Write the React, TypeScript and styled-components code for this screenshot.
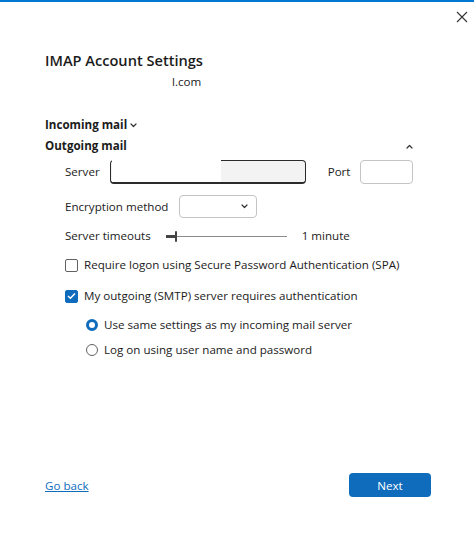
import React from 'react';
import styled, { createGlobalStyle } from 'styled-components';

const GlobalStyle = createGlobalStyle`
  body {
    margin: 0;
    background: #ffffff;
    font-family: 'Open Sans', 'Noto Sans', sans-serif;
    color: #1b1b1b;
  }
`;

const Window = styled.div`
  width: 474px;
  height: 545px;
  box-sizing: border-box;
  border-top: 2px solid #0078d4;
  background: #ffffff;
  display: flex;
  flex-direction: column;
`;

const TitleBar = styled.div`
  height: 46px;
  display: flex;
  justify-content: flex-end;
  align-items: flex-start;
  padding: 7px 5px 0 0;
  box-sizing: border-box;
`;

const CloseButton = styled.button`
  width: 15px;
  height: 15px;
  padding: 0;
  border: 0;
  background: none;
  display: flex;
  align-items: center;
  justify-content: center;
  color: #333333;
`;

const Content = styled.div`
  padding: 0 44px 0 45px;
  display: flex;
  flex-direction: column;
`;

const Title = styled.h1`
  margin: 0;
  font-size: 14.6px;
  font-weight: 600;
  line-height: 24px;
`;

const Subtitle = styled.div`
  font-size: 11.6px;
  line-height: 20px;
  padding-left: 127px;
  margin-bottom: 23px;
`;

const SectionHeader = styled.div<{ $gap?: number }>`
  display: flex;
  align-items: center;
  font-size: 11.6px;
  font-weight: 700;
  line-height: 20px;
  margin-top: ${({ $gap }) => $gap ?? 0}px;
`;

const InlineChevron = styled.span`
  display: inline-flex;
  margin-left: 3px;
`;

const RightChevron = styled.span`
  display: inline-flex;
  margin-left: auto;
  margin-right: 17px;
`;

const Section = styled.div`
  padding-left: 20px;
  display: flex;
  flex-direction: column;
`;

const Row = styled.div<{ $top: number; $gap?: number }>`
  display: flex;
  align-items: center;
  gap: ${({ $gap }) => $gap ?? 10}px;
  margin-top: ${({ $top }) => $top}px;
  font-size: 11.6px;
  line-height: 20px;
`;

const Field = styled.div<{ $width: number }>`
  position: relative;
  width: ${({ $width }) => $width}px;
  height: 24px;
  box-sizing: border-box;
  border: 1px solid #2b2b2b;
  border-bottom-width: 2px;
  border-radius: 4px;
  background: #f3f3f3;
`;

const Redaction = styled.div`
  position: absolute;
  left: 1px;
  top: -1px;
  width: 109px;
  bottom: 0;
  background: #ffffff;
`;

const PortLabel = styled.span`
  margin-left: 12px;
`;

const SmallInput = styled.div<{ $width: number; $height: number }>`
  width: ${({ $width }) => $width}px;
  height: ${({ $height }) => $height}px;
  box-sizing: border-box;
  border: 1px solid #c4c4c4;
  border-radius: 4px;
  background: #ffffff;
`;

const Select = styled(SmallInput)`
  display: flex;
  align-items: center;
  justify-content: flex-end;
  padding-right: 8px;
`;

const SliderTrack = styled.div`
  position: relative;
  width: 121px;
  height: 1px;
  background: #8a8a8a;
  margin-left: 5px;
  margin-right: 5px;
`;

const SliderFill = styled.div`
  position: absolute;
  left: 0;
  top: -1px;
  width: 10px;
  height: 3px;
  background: #444444;
`;

const SliderThumb = styled.div`
  position: absolute;
  left: 9px;
  top: -5px;
  width: 2px;
  height: 11px;
  border-radius: 1px;
  background: #444444;
`;

const Box = styled.span<{ $checked?: boolean }>`
  width: 13px;
  height: 13px;
  box-sizing: border-box;
  border-radius: 2px;
  border: 1px solid ${({ $checked }) => ($checked ? '#0f6cbd' : '#616161')};
  background: ${({ $checked }) => ($checked ? '#0f6cbd' : '#ffffff')};
  display: flex;
  align-items: center;
  justify-content: center;
  flex-shrink: 0;
`;

const Radio = styled.span<{ $checked?: boolean }>`
  width: 12px;
  height: 12px;
  box-sizing: border-box;
  border-radius: 50%;
  border: ${({ $checked }) => ($checked ? '3.5px solid #0f6cbd' : '1px solid #616161')};
  background: #ffffff;
  flex-shrink: 0;
`;

const RadioGroup = styled.div`
  padding-left: 21px;
  display: flex;
  flex-direction: column;
`;

const Footer = styled.div`
  margin-top: auto;
  padding: 0 43px 48px 45px;
  display: flex;
  align-items: center;
  justify-content: space-between;
`;

const Link = styled.a`
  color: #0f6cbd;
  font-size: 11.6px;
  text-decoration: underline;
  cursor: pointer;
`;

const PrimaryButton = styled.button`
  width: 82px;
  height: 24px;
  border: 0;
  border-radius: 4px;
  background: #0f6cbd;
  color: #ffffff;
  font-family: inherit;
  font-size: 11.6px;
  font-weight: 500;
`;

const Chevron = ({ up }: { up?: boolean }) => (
  <svg width="7" height="5" viewBox="0 0 7 5" fill="none">
    <path
      d={up ? 'M1 4 L3.5 1.5 L6 4' : 'M1 1 L3.5 3.5 L6 1'}
      stroke="#333"
      strokeWidth="1.2"
      strokeLinecap="round"
      strokeLinejoin="round"
    />
  </svg>
);

const App = () => (
  <>
    <GlobalStyle />
    <Window>
      <TitleBar>
        <CloseButton aria-label="Close">
          <svg width="12" height="12" viewBox="0 0 12 12">
            <path d="M1 1 L11 11 M11 1 L1 11" stroke="#333" strokeWidth="1.1" />
          </svg>
        </CloseButton>
      </TitleBar>
      <Content>
        <Title>IMAP Account Settings</Title>
        <Subtitle>l.com</Subtitle>
        <SectionHeader>
          Incoming mail
          <InlineChevron>
            <Chevron />
          </InlineChevron>
        </SectionHeader>
        <SectionHeader $gap={1}>
          Outgoing mail
          <RightChevron>
            <Chevron up />
          </RightChevron>
        </SectionHeader>
        <Section>
          <Row $top={4} $gap={10}>
            <span>Server</span>
            <Field $width={196}>
              <Redaction />
            </Field>
            <PortLabel>Port</PortLabel>
            <SmallInput $width={53} $height={24} />
          </Row>
          <Row $top={11} $gap={11}>
            <span>Encryption method</span>
            <Select $width={78} $height={23}>
              <Chevron />
            </Select>
          </Row>
          <Row $top={8} $gap={10}>
            <span>Server timeouts</span>
            <SliderTrack>
              <SliderFill />
              <SliderThumb />
            </SliderTrack>
            <span>1 minute</span>
          </Row>
          <Row $top={9} $gap={6}>
            <Box />
            <span>Require logon using Secure Password Authentication (SPA)</span>
          </Row>
          <Row $top={11} $gap={6}>
            <Box $checked>
              <svg width="9" height="8" viewBox="0 0 9 8">
                <path d="M1 4 L3.4 6.3 L8 1.5" stroke="#fff" strokeWidth="1.4" fill="none" />
              </svg>
            </Box>
            <span>My outgoing (SMTP) server requires authentication</span>
          </Row>
          <RadioGroup>
            <Row $top={9} $gap={6}>
              <Radio $checked />
              <span>Use same settings as my incoming mail server</span>
            </Row>
            <Row $top={5} $gap={6}>
              <Radio />
              <span>Log on using user name and password</span>
            </Row>
          </RadioGroup>
        </Section>
      </Content>
      <Footer>
        <Link>Go back</Link>
        <PrimaryButton>Next</PrimaryButton>
      </Footer>
    </Window>
  </>
);

export default App;
